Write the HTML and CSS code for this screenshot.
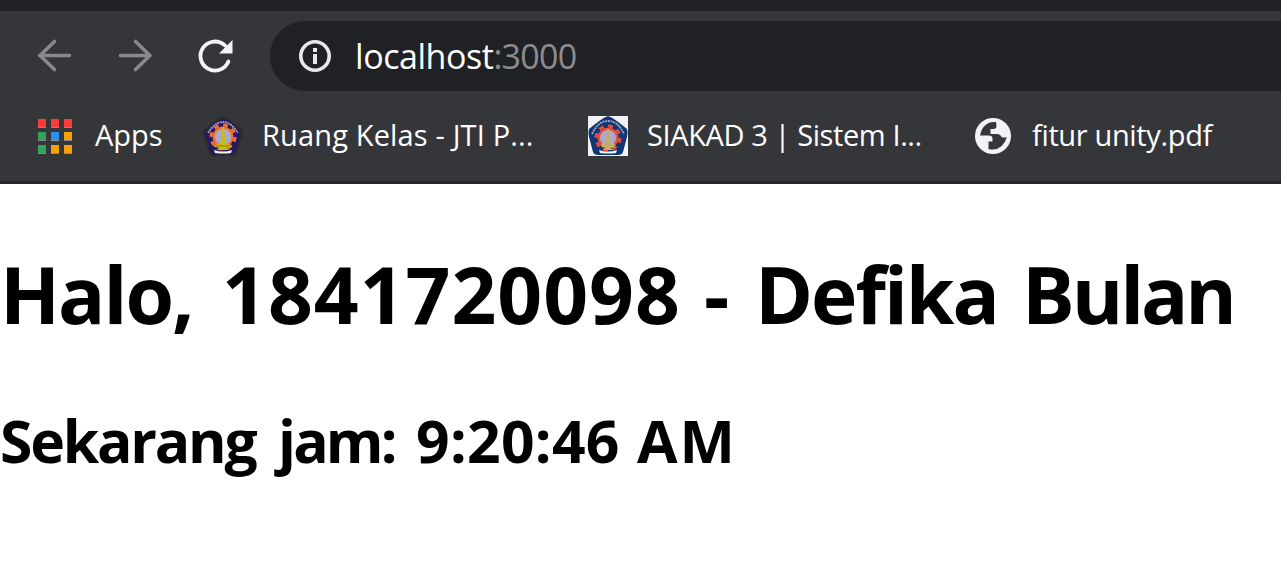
FILE: index.html
```html
<!DOCTYPE html>
<html lang="id">
<head>
<meta charset="utf-8">
<title>localhost:3000</title>
<link rel="stylesheet" href="styles.css">
</head>
<body>
<header class="browser">
  <div class="tabstrip"></div>
  <nav class="toolbar">
    <svg class="nav-icon" viewBox="0 0 40 40"><path class="arrow" d="M34.500 19.500H4.500M19.500 5.500L5 19.500l14.500 14"/></svg>
    <svg class="nav-icon" viewBox="0 0 40 40"><path class="arrow" d="M5.500 19.500H35M20.500 5.500l14.500 14l-14.500 14"/></svg>
    <svg class="nav-icon" viewBox="0 0 40 40"><path class="reload" d="M33.400 25.500A14.500 14.500 0 1 1 30 9.500"/><path class="light" d="M37.500 4V17.500H24Z"/></svg>
    <div class="omnibox">
      <svg class="info" viewBox="0 0 32 32"><circle class="info-ring" cx="16" cy="16" r="14.200"/><path class="info-mark" d="M14 8h4v4h-4zM14 14h4v10h-4z"/></svg>
      <span class="url"><span class="host">localhost</span><span class="port">:3000</span></span>
    </div>
  </nav>
  <div class="bookmarks">
    <a class="bookmark apps">
      <svg class="apps-icon" viewBox="0 0 34 35">
        <path class="tile-edge" d="M0 1h8v8H0zM13 1h8v8h-8zM26 1h8v8h-8zM0 14h8v8H0zM13 14h8v8h-8zM26 14h8v8h-8zM0 27h8v8H0zM13 27h8v8h-8zM26 27h8v8h-8z"/>
        <path class="red" d="M0 0h8v8H0zM13 0h8v8h-8zM26 0h8v8h-8z"/>
        <path class="green" d="M0 13h8v8H0zM0 26h8v8H0z"/>
        <path class="blue" d="M13 13h8v8h-8z"/>
        <path class="yellow" d="M26 13h8v8h-8zM13 26h8v8h-8zM26 26h8v8h-8z"/>
      </svg>
      <span class="label">Apps</span>
    </a>
    <a class="bookmark kelas">
      <svg class="crest" viewBox="0 0 40 40">
        <path class="crest-border" d="M20 0Q24 1 38 13Q41 15 39 20L34 37Q33 40 29 40H11Q7 40 6 37L1 20Q-1 15 2 13Q16 1 20 0Z"/>
        <path class="crest-purple" d="M20 3Q25 4 36 14Q38 16 37 19L32 36Q31 38 28 38H12Q9 38 8 36L3 19Q2 16 4 14Q15 4 20 3Z"/>
        <path class="crest-motto" d="M5 17Q12 6 20 6Q28 6 35 17"/>
        <circle class="gear-teeth" cx="20" cy="21" r="12"/>
        <circle class="gear" cx="20" cy="21" r="10.500"/>
        <circle class="gear-center" cx="20" cy="21" r="8"/>
        <path class="monument" d="M19.200 11h1.600l1.700 17l6 1v2l-5 1l3 2H13.500l3-2l-5-1v-2l6-1z"/>
        <path class="monument-shade" d="M13 30h14"/>
        <path class="ribbon" d="M11 34Q20 37 29 34L28 37Q20 38 12 37Z"/>
      </svg>
      <span class="label">Ruang Kelas - JTI P...</span>
    </a>
    <a class="bookmark siakad">
      <svg class="crest" viewBox="0 0 40 40">
        <path class="white" d="M0 0h40v40H0z"/>
        <path class="crest-blue" d="M20 0Q26 2 39 13Q40 16 39 21L35 36Q34 39 30 39H10Q6 39 5 36L1 21Q0 16 1 13Q14 2 20 0Z"/>
        <path class="crest-motto" d="M4 18Q10 5 20 5Q30 5 36 18"/>
        <circle class="gear-teeth vermilion" cx="20" cy="22" r="12"/>
        <circle class="gear vermilion" cx="20" cy="22" r="10.500"/>
        <circle class="gear-center" cx="20" cy="22" r="8"/>
        <path class="monument pale" d="M19.200 13h1.600l1.700 14l4 1v3l-4 1l3 2H14.500l3-2l-4-1v-3l4-1z"/>
        <path class="ribbon" d="M11 34Q20 37 29 34L28 37Q20 38 12 37Z"/>
      </svg>
      <span class="label">SIAKAD 3 | Sistem I...</span>
    </a>
    <a class="bookmark pdf">
      <svg class="globe" viewBox="0 0 36 36"><circle class="light" cx="18" cy="18" r="18"/><path class="globe-sea" d="M21 4Q8 3 5 17.500h8.500q4 0 4 3v3h-4v7.500Q27 34 32 19q-3 1-5.500 0q-1-3-5-3h-6v-5h3q3 0 3-3z"/></svg>
      <span class="label">fitur unity.pdf</span>
    </a>
  </div>
</header>
<main class="page">
  <h1 class="greeting"><span class="g1">Halo,</span> <span class="g2">1841720098</span> <span class="g3">-</span> <span class="g4">Defika</span> <span class="g5">Bulan</span></h1>
  <h2 class="clock"><span class="c1">Sekarang</span> <span class="c2">jam:</span> <span class="c3">9:20:46</span> <span class="c4">AM</span></h2>
</main>
</body>
</html>
```
FILE: styles.css
```css
* { box-sizing: border-box; }
body { margin: 0; height: 564px; overflow: hidden; background: #fff; font-family: "Open Sans", "Noto Sans", sans-serif; }
.browser { height: 184px; background: #35363a; border-bottom: 3px solid #272729; }
.tabstrip { height: 11px; background: #202124; }
.toolbar { height: 90px; display: flex; align-items: center; padding-left: 35px; }
.nav-icon { width: 40px; height: 40px; margin-right: 40px; flex: none; }
.nav-icon:nth-child(3) { margin-right: 35px; }
.arrow { fill: none; stroke: #88898c; stroke-width: 3.6; stroke-linecap: round; stroke-linejoin: round; }
.reload { fill: none; stroke: #f1f3f4; stroke-width: 3.8; stroke-linecap: round; }
.light { fill: #f1f3f4; }
.omnibox { flex: 1; height: 70px; background: #202124; border-radius: 35px 0 0 35px; display: flex; align-items: center; padding-left: 29px; }
.info { width: 32px; height: 32px; margin-right: 24px; }
.info-ring { fill: none; stroke: #e8e8e8; stroke-width: 3.6; }
.info-mark { fill: #e8e8e8; }
.url { display: flex; font-size: 34px; line-height: 46px; color: #fff; }
.host { letter-spacing: -.45px; }
.port { color: #8b8c8e; letter-spacing: -.7px; }
.bookmarks { height: 70px; display: flex; }
.bookmark { display: flex; align-items: center; flex: none; color: #fff; font-size: 29px; white-space: nowrap; }
.label { padding-bottom: 3px; }
.kelas .label { letter-spacing: .15px; }
.siakad .label { letter-spacing: -.4px; }
.pdf .label { letter-spacing: -.35px; }
.apps { width: 203px; padding-left: 38px; }
.apps-icon { width: 34px; height: 35px; margin-right: 23px; }
.tile-edge { fill: #8b8c91; }
.red { fill: #f83b36; }
.green { fill: #33a25a; }
.blue { fill: #2490f5; }
.yellow { fill: #f4a207; }
.kelas { width: 385px; }
.siakad { width: 387px; }
.crest { width: 40px; height: 40px; margin-right: 19px; }
.globe { width: 36px; height: 36px; margin-right: 21px; }
.globe-sea { fill: #35363a; }
.crest-border { fill: #292a2d; }
.crest-purple { fill: #291669; }
.crest-blue { fill: #103775; }
.crest-motto { fill: none; stroke: #aaa5bd; stroke-width: 1.8; stroke-dasharray: 2 .7; }
.gear-teeth { fill: none; stroke: #ef742c; stroke-width: 3; stroke-dasharray: 4.7 4.7; }
.gear { fill: #ef742c; }
.gear.vermilion { fill: #eb4e32; }
.gear-teeth.vermilion { stroke: #eb4e32; }
.gear-center { fill: #aaaad0; }
.monument { fill: #c9be10; }
.monument.pale { fill: #c5ad62; }
.monument-shade { stroke: #8b8c0a; stroke-width: 1.2; }
.ribbon, .white { fill: #f2f2f4; }
.page { color: #000; padding-top: 56px; }
.greeting, .clock { display: flex; margin: 0; white-space: nowrap; font-weight: 700; }
.greeting { font-size: 78.5px; line-height: 107px; }
.clock { font-size: 58.8px; line-height: 80px; margin-top: 53px; }
.greeting span, .clock span { flex: none; }
.g1 { width: 222px; letter-spacing: -2px; }
.g2 { width: 482px; letter-spacing: 1px; }
.g3 { width: 51px; }
.g4 { width: 267px; letter-spacing: -2px; }
.g5 { letter-spacing: -3.1px; }
.c1 { width: 278px; letter-spacing: -2.2px; }
.c2 { width: 138px; letter-spacing: -2.8px; }
.c3 { width: 221px; letter-spacing: .3px; }
.c4 { letter-spacing: 2px; }
```
